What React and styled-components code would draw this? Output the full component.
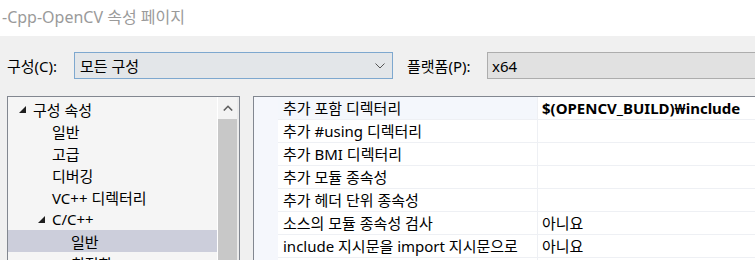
import styled, { createGlobalStyle } from "styled-components";

const GlobalStyle = createGlobalStyle`
    html, body {
        margin: 0;
        padding: 0;
        background: #f0f0f0;
    }
    body {
        width: 755px;
        height: 260px;
        overflow: hidden;
        font-family: "Noto Sans", "Noto Sans CJK KR", sans-serif;
        font-size: 15px;
        color: #000;
    }
`;

const treeItems = [
    { label: "구성 속성", depth: 0, arrow: true },
    { label: "일반", depth: 1 },
    { label: "고급", depth: 1 },
    { label: "디버깅", depth: 1 },
    { label: "VC++ 디렉터리", depth: 1 },
    { label: "C/C++", depth: 1, arrow: true },
    { label: "일반", depth: 2, selected: true },
    { label: "최적화", depth: 2 },
];

const props = [
    { name: "추가 포함 디렉터리", value: "$(OPENCV_BUILD)₩include", bold: true, active: true },
    { name: "추가 #using 디렉터리", value: "" },
    { name: "추가 BMI 디렉터리", value: "" },
    { name: "추가 모듈 종속성", value: "" },
    { name: "추가 헤더 단위 종속성", value: "" },
    { name: "소스의 모듈 종속성 검사", value: "아니요" },
    { name: "include 지시문을 import 지시문으로", value: "아니요" },
    { name: "", value: "" },
];

function Expander() {
    return (
        <svg width="7" height="7" viewBox="0 0 7 7">
            <polygon points="0,7 7,7 7,0" fill="#1e1e1e" />
        </svg>
    );
}

export default function App() {
    return (
        <>
            <GlobalStyle />
            <Page>
                <TitleBar>-Cpp-OpenCV 속성 페이지</TitleBar>
                <ConfigRow>
                    <Label>구성(C):</Label>
                    <Select>
                        <span>모든 구성</span>
                        <svg width="10" height="6" viewBox="0 0 10 6">
                            <polyline points="0.5,0.5 5,5 9.5,0.5" fill="none" stroke="#555" strokeWidth="1" />
                        </svg>
                    </Select>
                    <Label className="platform">플랫폼(P):</Label>
                    <Field>x64</Field>
                </ConfigRow>
                <Panels>
                    <TreePanel>
                        <TreeList>
                            {treeItems.map((item, i) => (
                                <TreeRow key={i} $depth={item.depth} $selected={item.selected}>
                                    <ArrowSlot>{item.arrow && <Expander />}</ArrowSlot>
                                    {item.label}
                                </TreeRow>
                            ))}
                        </TreeList>
                        <ScrollBar>
                            <ScrollButton>
                                <svg width="10" height="6" viewBox="0 0 10 6">
                                    <polyline points="0.8,5.5 5,1.3 9.2,5.5" fill="none" stroke="#606060" strokeWidth="1.6" />
                                </svg>
                            </ScrollButton>
                            <Thumb />
                        </ScrollBar>
                    </TreePanel>
                    <Grid>
                        {props.map((p, i) => (
                            <GridRow key={i}>
                                <Gutter />
                                <NameCell $active={p.active}>{p.name}</NameCell>
                                <ValueCell $bold={p.bold}>{p.value}</ValueCell>
                            </GridRow>
                        ))}
                    </Grid>
                </Panels>
            </Page>
        </>
    );
}

const Page = styled.div`
    display: flex;
    flex-direction: column;
    width: 755px;
    height: 260px;
`;

const TitleBar = styled.div`
    height: 36px;
    background: #fff;
    color: #9a9a9a;
    font-size: 16px;
    line-height: 34px;
    padding-left: 2px;
`;

const ConfigRow = styled.div`
    display: flex;
    align-items: center;
    margin-top: 16px;
    height: 27px;
    padding-left: 7px;
`;

const Label = styled.div`
    width: 67px;
    &.platform {
        width: 80px;
        margin-left: 14px;
    }
`;

const Select = styled.div`
    box-sizing: border-box;
    width: 319px;
    height: 27px;
    display: flex;
    align-items: center;
    justify-content: space-between;
    padding: 0 7px 0 5px;
    background: #e3e6e9;
    border: 1px solid #7ea8cf;
`;

const Field = styled.div`
    box-sizing: border-box;
    flex: 1;
    height: 27px;
    margin-right: -4px;
    display: flex;
    align-items: center;
    padding-left: 4px;
    background: #e1e1e1;
    border: 1px solid #adadad;
`;

const Panels = styled.div`
    display: flex;
    margin-top: 17px;
    padding-left: 7px;
    flex: 1;
    min-height: 0;
`;

const TreePanel = styled.div`
    box-sizing: border-box;
    width: 233px;
    height: 180px;
    display: flex;
    border: 1px solid #828790;
    background: #f5f5f5;
`;

const TreeList = styled.div`
    width: 209px;
    border-right: 1px solid #ffffff;
    padding-top: 1px;
`;

const TreeRow = styled.div`
    display: flex;
    align-items: center;
    height: 22px;
    padding-left: ${p => 11 + p.$depth * 19}px;
    background: ${p => (p.$selected ? "#cccedb" : "transparent")};
    white-space: nowrap;
`;

const ArrowSlot = styled.span`
    display: inline-flex;
    width: 14px;
    margin-right: 0;
    align-items: center;
    padding-top: 1px;
`;

const ScrollBar = styled.div`
    width: 21px;
    display: flex;
    flex-direction: column;
    background: #ececec;
`;

const ScrollButton = styled.div`
    width: 19px;
    height: 22px;
    display: flex;
    align-items: center;
    justify-content: center;
    background: #f3f3f3;
`;

const Thumb = styled.div`
    width: 19px;
    flex: 1;
    background: #c8c8c8;
`;

const Grid = styled.div`
    flex: 1;
    margin-left: 13px;
    border-left: 1px solid #828790;
    border-top: 1px solid #828790;
    background: #fff;
`;

const GridRow = styled.div`
    display: flex;
    height: 23px;
`;

const Gutter = styled.div`
    width: 24px;
    background: #f5f7fc;
`;

const NameCell = styled.div`
    box-sizing: border-box;
    width: 260px;
    padding-left: 5px;
    line-height: 22px;
    white-space: nowrap;
    background: ${p => (p.$active ? "#f4f7fc" : "#fff")};
    border-bottom: 1px solid #eef0f4;
    border-right: 1px solid #eef0f4;
`;

const ValueCell = styled.div`
    box-sizing: border-box;
    flex: 1;
    padding-left: 4px;
    line-height: 22px;
    white-space: nowrap;
    font-weight: ${p => (p.$bold ? 700 : 400)};
    border-bottom: 1px solid #eef0f4;
`;
